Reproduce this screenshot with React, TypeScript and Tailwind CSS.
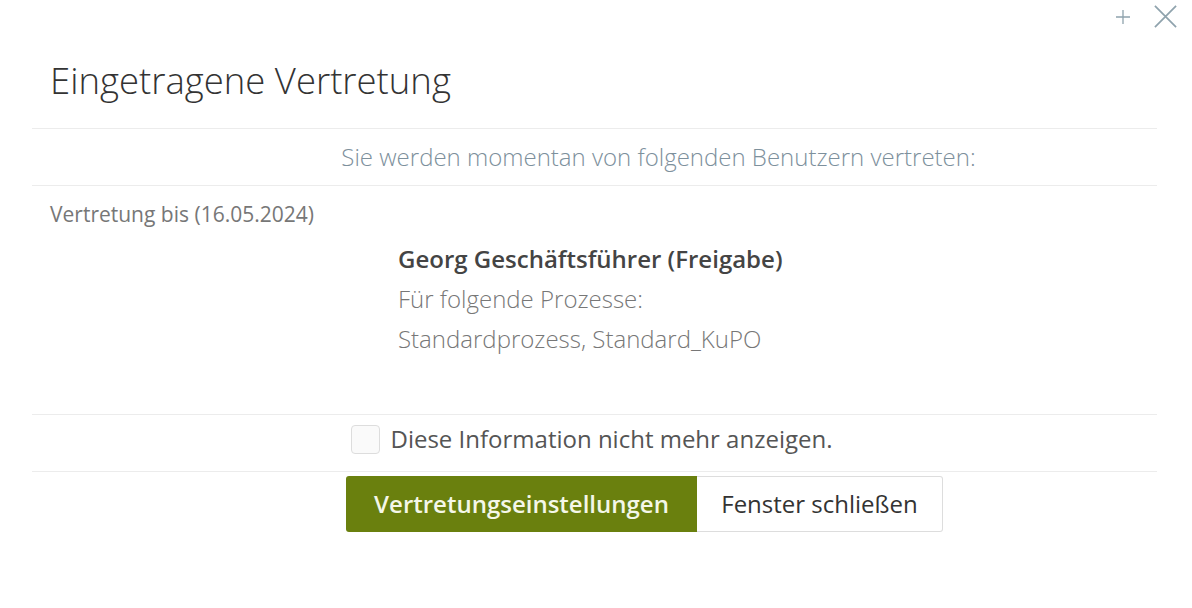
import { useState } from "react";

const SANS = "font-['Open_Sans','Liberation_Sans',sans-serif]";

export default function App() {
  const [hide, setHide] = useState(false);

  return (
    <div className={`relative h-[608px] w-[1192px] bg-white ${SANS}`}>
      {/* window controls */}
      <div className="absolute right-[14px] top-[4px] flex items-center gap-[22px] text-[#8fa3ad]">
        <svg width="16" height="16" viewBox="0 0 16 16" stroke="currentColor" strokeWidth="1.3">
          <path d="M8 1v14M1 8h14" />
        </svg>
        <svg width="25" height="25" viewBox="0 0 26 26" stroke="currentColor" strokeWidth="1.8">
          <path d="M2 2l22 22M24 2L2 24" />
        </svg>
      </div>

      <div className="pl-[32px] pr-[35px] pt-[52px]">
        <h1 className="pl-[18px] text-[36.5px] font-light leading-[56px] text-[#333]">Eingetragene Vertretung</h1>

        <div className="mt-[20px] border-t border-[#ececec]" />
        <div className="flex h-[56px] items-center justify-center pl-[128px] text-[24px] font-light text-[#7d909c]">
          Sie werden momentan von folgenden Benutzern vertreten:
        </div>
        <div className="border-t border-[#ececec]" />

        <div className="pl-[18px] pt-[14px] text-[21px] leading-[28px] text-[#777]">Vertretung bis (16.05.2024)</div>
        <div className="pl-[366px] pt-[11px] text-[24px] leading-[40px] text-[#777]">
          <div className="font-semibold text-[#444]">Georg Geschäftsführer (Freigabe)</div>
          <div className="font-light">Für folgende Prozesse:</div>
          <div className="font-light">Standardprozess, Standard_KuPO</div>
        </div>

        <div className="mt-[55px] border-t border-[#ececec]" />
        <label className="flex h-[56px] cursor-pointer items-center justify-center gap-[10px] pb-[8px] pr-[5px]">
          <input
            type="checkbox"
            checked={hide}
            onChange={(e) => setHide(e.target.checked)}
            className="h-[29px] w-[29px] cursor-pointer appearance-none rounded-[4px] border border-[#ddd] bg-[#fafafa] checked:bg-[#6a800e]"
          />
          <span className="text-[24px] text-[#555]">Diese Information nicht mehr anzeigen.</span>
        </label>
        <div className="border-t border-[#ececec]" />

        <div className="flex justify-center pl-[100px] pt-[4px]">
          <button className="h-[56px] w-[351px] rounded-l-[3px] bg-[#6a800e] text-[24px] font-semibold text-[#f4f7e8]">
            Vertretungseinstellungen
          </button>
          <button className="h-[56px] w-[246px] rounded-r-[3px] border border-l-0 border-[#ddd] bg-white text-[24px] text-[#333]">
            Fenster schließen
          </button>
        </div>
      </div>
    </div>
  );
}
